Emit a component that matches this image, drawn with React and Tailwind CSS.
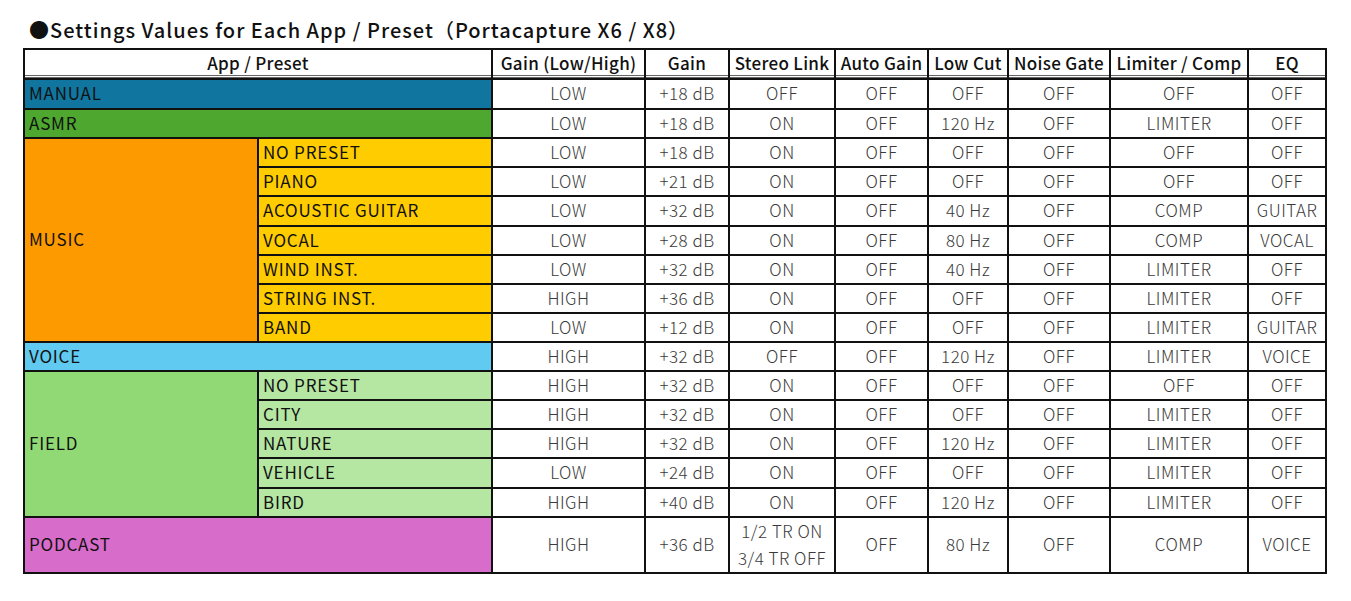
import React from "react";

const font = { fontFamily: '"Noto Sans CJK JP", "Noto Sans", sans-serif' };

const data = {
  MANUAL: ["LOW", "+18 dB", "OFF", "OFF", "OFF", "OFF", "OFF", "OFF"],
  ASMR: ["LOW", "+18 dB", "ON", "OFF", "120 Hz", "OFF", "LIMITER", "OFF"],
  VOICE: ["HIGH", "+32 dB", "OFF", "OFF", "120 Hz", "OFF", "LIMITER", "VOICE"],
};

const music = [
  ["NO PRESET", ["LOW", "+18 dB", "ON", "OFF", "OFF", "OFF", "OFF", "OFF"]],
  ["PIANO", ["LOW", "+21 dB", "ON", "OFF", "OFF", "OFF", "OFF", "OFF"]],
  ["ACOUSTIC GUITAR", ["LOW", "+32 dB", "ON", "OFF", "40 Hz", "OFF", "COMP", "GUITAR"]],
  ["VOCAL", ["LOW", "+28 dB", "ON", "OFF", "80 Hz", "OFF", "COMP", "VOCAL"]],
  ["WIND INST.", ["LOW", "+32 dB", "ON", "OFF", "40 Hz", "OFF", "LIMITER", "OFF"]],
  ["STRING INST.", ["HIGH", "+36 dB", "ON", "OFF", "OFF", "OFF", "LIMITER", "OFF"]],
  ["BAND", ["LOW", "+12 dB", "ON", "OFF", "OFF", "OFF", "LIMITER", "GUITAR"]],
];

const field = [
  ["NO PRESET", ["HIGH", "+32 dB", "ON", "OFF", "OFF", "OFF", "OFF", "OFF"]],
  ["CITY", ["HIGH", "+32 dB", "ON", "OFF", "OFF", "OFF", "LIMITER", "OFF"]],
  ["NATURE", ["HIGH", "+32 dB", "ON", "OFF", "120 Hz", "OFF", "LIMITER", "OFF"]],
  ["VEHICLE", ["LOW", "+24 dB", "ON", "OFF", "OFF", "OFF", "LIMITER", "OFF"]],
  ["BIRD", ["HIGH", "+40 dB", "ON", "OFF", "120 Hz", "OFF", "LIMITER", "OFF"]],
];

const headers = [
  "Gain (Low/High)",
  "Gain",
  "Stereo Link",
  "Auto Gain",
  "Low Cut",
  "Noise Gate",
  "Limiter / Comp",
  "EQ",
];

function Val({ children }) {
  return (
    <div className="bg-white flex items-center justify-center pb-[3px] text-[17px] font-light tracking-[0.5px] text-[#3a3a3a] leading-none whitespace-nowrap">
      {children}
    </div>
  );
}

function Label({ children, className = "" }) {
  return (
    <div className={`flex items-center pl-[4px] pb-[3px] text-[17px] tracking-[0.8px] text-[#111] leading-none whitespace-nowrap ${className}`}>
      {children}
    </div>
  );
}

function Head({ children, className = "" }) {
  return (
    <div
      className={`bg-white flex items-center justify-center pb-[1px] text-[17px] font-medium tracking-[0.3px] text-[#111] leading-none whitespace-nowrap border-b-[3px] border-double border-[#666] ${className}`}
    >
      {children}
    </div>
  );
}

export default function App() {
  return (
    <div className="w-[1351px] h-[601px] bg-white" style={font}>
      <div className="pt-[17px] pl-[29px] h-[48px]">
        <div className="text-[20px] font-medium tracking-[1px] text-[#111] leading-[26px] whitespace-nowrap">
          ●Settings Values for Each App / Preset（Portacapture X6 / X8）
        </div>
      </div>
      <div className="ml-[23px] w-[1304px] grid grid-cols-[232px_232px_151px_82px_104px_91px_78px_100px_136px_76px] grid-rows-[28px_28px_27px_27px_27px_28px_27px_27px_27px_27px_27px_27px_27px_27px_28px_27px_54px] gap-[2px] p-[2px] bg-[#111]">
        <Head className="col-span-2">App / Preset</Head>
        {headers.map((h) => (
          <Head key={h}>{h}</Head>
        ))}

        <Label className="col-span-2 bg-[#1076a0]">MANUAL</Label>
        {data.MANUAL.map((v, i) => (
          <Val key={"m" + i}>{v}</Val>
        ))}

        <Label className="col-span-2 bg-[#4ea72e]">ASMR</Label>
        {data.ASMR.map((v, i) => (
          <Val key={"a" + i}>{v}</Val>
        ))}

        <Label className="row-span-7 bg-[#fd9a00]">MUSIC</Label>
        {music.map(([name, vals]) => (
          <React.Fragment key={"mu" + name}>
            <Label className="bg-[#ffcc00]">{name}</Label>
            {vals.map((v, i) => (
              <Val key={i}>{v}</Val>
            ))}
          </React.Fragment>
        ))}

        <Label className="col-span-2 bg-[#60caf0]">VOICE</Label>
        {data.VOICE.map((v, i) => (
          <Val key={"v" + i}>{v}</Val>
        ))}

        <Label className="row-span-5 bg-[#90d975]">FIELD</Label>
        {field.map(([name, vals]) => (
          <React.Fragment key={"f" + name}>
            <Label className="bg-[#b5e6a2]">{name}</Label>
            {vals.map((v, i) => (
              <Val key={i}>{v}</Val>
            ))}
          </React.Fragment>
        ))}

        <Label className="col-span-2 bg-[#d86ccb]">PODCAST</Label>
        <Val>HIGH</Val>
        <Val>+36 dB</Val>
        <div className="bg-white flex flex-col items-center justify-center pb-[2px] text-[17px] font-light tracking-[0.5px] text-[#3a3a3a] leading-[27px] whitespace-nowrap">
          <span>1/2 TR ON</span>
          <span>3/4 TR OFF</span>
        </div>
        <Val>OFF</Val>
        <Val>80 Hz</Val>
        <Val>OFF</Val>
        <Val>COMP</Val>
        <Val>VOICE</Val>
      </div>
    </div>
  );
}
